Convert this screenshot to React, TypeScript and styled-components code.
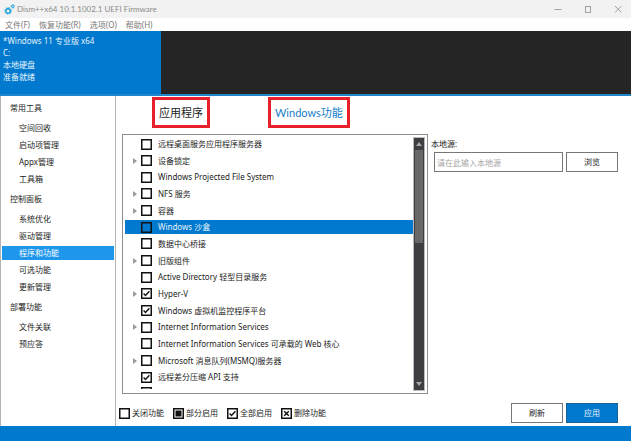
import React, { useState } from "react";
import styled, { createGlobalStyle } from "styled-components";

const GlobalStyle = createGlobalStyle`
  *, *::before, *::after { box-sizing: border-box; }
  body { margin: 0; }
  body, button, input {
    font-family: "Noto Sans", "Noto Sans CJK SC", sans-serif;
    font-size: 8px;
    line-height: 12px;
    color: #1c1c1c;
  }
  button { cursor: pointer; }
`;

const Window = styled.div`
  min-height: 100vh;
  display: flex;
  flex-direction: column;
  background: #fff;
`;

const TitleBar = styled.header`
  height: 18px;
  display: flex;
  align-items: center;
  gap: 2px;
  padding-left: 4px;
  background: #f2f2f2;
`;

const Title = styled.h1`
  flex: 1;
  margin: 0;
  font-family: Lato, "Noto Sans CJK SC", sans-serif;
  font-size: 8px;
  font-weight: 400;
  color: #8c8c8c;
`;

const CaptionButtons = styled.div`
  display: flex;
  gap: 4px;
`;

const CaptionButton = styled.button`
  width: 26px;
  height: 18px;
  display: grid;
  place-items: center;
  padding: 0;
  border: 0;
  background: none;
`;

const MenuBar = styled.nav`
  height: 13px;
  display: flex;
  align-items: center;
  gap: 9px;
  padding-left: 5px;
`;

const MenuButton = styled.button`
  padding: 0;
  border: 0;
  background: none;
  color: #777;
`;

const Banner = styled.section`
  height: 65px;
  display: flex;
  border-bottom: 2px solid #1f86cb;
  background: #252525;
`;

const SystemCard = styled.div`
  width: 161px;
  padding: 4px 3px;
  background: #0079ce;
  color: #e6f3fc;
`;

const SystemLine = styled.p`
  margin: 0;
`;

const Body = styled.div`
  flex: 1;
  display: flex;
`;

const Sidebar = styled.nav`
  width: 116px;
  padding: 6px 1px;
  border: solid #b4b4b4;
  border-width: 0 1px;
`;

const GroupTitle = styled.h2`
  margin: 0;
  padding-left: 8px;
  font-size: 8px;
  font-weight: 400;
`;

const NavList = styled.ul`
  display: flex;
  flex-direction: column;
  gap: 3px;
  margin: 0;
  padding: 7px 0;
  list-style: none;
`;

const NavLink = styled.a<{ $active: boolean }>`
  display: block;
  height: 14px;
  padding-left: 17px;
  line-height: 14px;
  text-decoration: none;
  color: ${(p) => (p.$active ? "#fff" : "#1c1c1c")};
  background: ${(p) => (p.$active ? "#1e96ec" : "transparent")};
`;

const Main = styled.main`
  flex: 1;
  min-width: 0;
  display: flex;
  flex-direction: column;
  padding: 1px 13px 3px 3px;
`;

const Tabs = styled.div`
  height: 33px;
  display: flex;
  align-items: flex-start;
  gap: 58px;
  padding-left: 33px;
`;

const Tab = styled.button<{ $active: boolean }>`
  height: 31px;
  padding: 0 4px;
  border: 3px solid #e8202c;
  background: none;
  font-family: Lato, "Noto Sans CJK SC", sans-serif;
  font-size: 11px;
  line-height: 24px;
  white-space: nowrap;
  color: ${(p) => (p.$active ? "#1580c8" : "#1c1c1c")};
`;

const Content = styled.div`
  flex: 1;
  display: flex;
  gap: 3px;
  padding: 4px 0 0 3px;
`;

const FeatureBox = styled.div`
  width: 306px;
  display: flex;
  padding: 2px;
  border: 1px solid #8f8f8f;
`;

const FeaturePane = styled.div`
  flex: 1;
  display: flex;
  flex-direction: column;
  padding-bottom: 2px;
`;

const FeatureList = styled.ul`
  flex: 1;
  display: grid;
  grid-auto-rows: 1fr;
  margin: 0;
  padding: 0;
  list-style: none;
`;

const FeatureRow = styled.li`
  min-height: 0;
  display: flex;
`;

const FeatureLine = styled.div<{ $selected: boolean }>`
  flex: 1;
  height: 14px;
  display: flex;
  align-items: center;
  color: ${(p) => (p.$selected ? "#e6f3fc" : "#1c1c1c")};
  background: ${(p) => (p.$selected ? "#0079ce" : "transparent")};
`;

const Expander = styled.button`
  width: 16px;
  height: 12px;
  display: flex;
  align-items: center;
  padding: 0 0 0 8px;
  border: 0;
  background: none;
`;

const ExpanderSpace = styled.span`
  width: 16px;
`;

const NextRow = styled.div`
  height: 2px;
  overflow: hidden;
  padding-left: 16px;
`;

const CheckLabel = styled.label<{ $gap: number }>`
  display: flex;
  align-items: center;
  gap: ${(p) => p.$gap}px;
  white-space: nowrap;
`;

const CheckFrame = styled.span`
  display: grid;
  width: 11px;
  height: 11px;
  > * { grid-area: 1 / 1; }
`;

const CheckInput = styled.input`
  appearance: none;
  width: 11px;
  height: 11px;
  margin: 0;
`;

const ScrollTrack = styled.div`
  width: 12px;
  display: flex;
  flex-direction: column;
  align-items: center;
  border: 1px solid #b9b9bb;
  background: #3e3e42;
`;

const ScrollButton = styled.button`
  width: 10px;
  height: 12px;
  display: grid;
  place-items: center;
  padding: 0;
  border: 0;
  background: none;
`;

const ScrollRange = styled.div`
  flex: 1;
`;

const ScrollThumb = styled.div`
  width: 8px;
  height: 41%;
  background: #686868;
`;

const SourcePanel = styled.form`
  flex: 1;
  min-width: 0;
  padding-top: 4px;
`;

const SourceLabel = styled.label`
  display: block;
`;

const SourceRow = styled.div`
  display: flex;
  gap: 3px;
  padding: 2px 0 0 3px;
`;

const SourceInput = styled.input`
  flex: 1;
  min-width: 0;
  height: 20px;
  padding: 0 2px;
  border: 1px solid #777;
  border-radius: 0;
  background: #fff;
  &::placeholder { color: #a6a6a6; }
`;

const PushButton = styled.button<{ $primary?: boolean }>`
  width: 52px;
  height: 20px;
  padding: 0;
  border: 1px solid ${(p) => (p.$primary ? "#1c5f91" : "#777")};
  background: ${(p) => (p.$primary ? "#0079ce" : "#fff")};
  color: ${(p) => (p.$primary ? "#e6f3fc" : "#1c1c1c")};
`;

const ActionRow = styled.div`
  display: flex;
  align-items: center;
  gap: 3px;
  padding-top: 9px;
`;

const Legend = styled.div`
  flex: 1;
  display: flex;
  gap: 9px;
`;

const StatusBar = styled.footer`
  height: 15px;
  background: #0079ce;
`;

type Mark = "off" | "on" | "part" | "remove";

function CheckGlyph({ mark }: { mark: Mark }) {
  return (
    <svg width="11" height="11" viewBox="0 0 11 11" fill="none" stroke="#111" aria-hidden="true">
      <rect x="0.75" y="0.75" width="9.5" height="9.5" strokeWidth="1.5" />
      {mark === "on" && <path d="M2.6 5.6 4.5 7.5 8.4 3.2" strokeWidth="1.4" />}
      {mark === "part" && <rect x="2.5" y="2.5" width="6" height="6" fill="#111" stroke="none" />}
      {mark === "remove" && <path d="M3.2 3.2 7.8 7.8M7.8 3.2 3.2 7.8" strokeWidth="1.5" />}
    </svg>
  );
}

interface CheckProps {
  text: string;
  initial: Mark;
  gap: number;
}

function Check({ text, initial, gap }: CheckProps) {
  const [mark, setMark] = useState<Mark>(initial);
  return (
    <CheckLabel $gap={gap}>
      <CheckFrame>
        <CheckGlyph mark={mark} />
        <CheckInput
          type="checkbox"
          checked={mark !== "off"}
          onChange={(e) => setMark(e.target.checked ? (initial === "off" ? "on" : initial) : "off")}
        />
      </CheckFrame>
      {text}
    </CheckLabel>
  );
}

const menus = ["文件(F)", "恢复功能(R)", "选项(O)", "帮助(H)"];

const systemLines = ["*Windows 11 专业版 x64", "C:", "本地硬盘", "准备就绪"];

const groups = [
  { title: "常用工具", items: ["空间回收", "启动项管理", "Appx管理", "工具箱"] },
  { title: "控制面板", items: ["系统优化", "驱动管理", "程序和功能", "可选功能", "更新管理"] },
  { title: "部署功能", items: ["文件关联", "预应答"] },
];

interface Feature {
  name: string;
  tree?: boolean;
  on?: boolean;
}

const features: Feature[] = [
  { name: "远程桌面服务应用程序服务器" },
  { name: "设备锁定", tree: true },
  { name: "Windows Projected File System" },
  { name: "NFS 服务", tree: true },
  { name: "容器", tree: true },
  { name: "Windows 沙盒" },
  { name: "数据中心桥接" },
  { name: "旧版组件", tree: true },
  { name: "Active Directory 轻型目录服务" },
  { name: "Hyper-V", tree: true, on: true },
  { name: "Windows 虚拟机监控程序平台", on: true },
  { name: "Internet Information Services", tree: true },
  { name: "Internet Information Services 可承载的 Web 核心" },
  { name: "Microsoft 消息队列(MSMQ)服务器", tree: true },
  { name: "远程差分压缩 API 支持", on: true },
];

const legend: { text: string; mark: Mark }[] = [
  { text: "关闭功能", mark: "off" },
  { text: "部分启用", mark: "part" },
  { text: "全部启用", mark: "on" },
  { text: "删除功能", mark: "remove" },
];

function GearsIcon() {
  return (
    <svg width="11" height="11" viewBox="0 0 11 11" fill="none" stroke="#1ba0dc" aria-hidden="true">
      <circle cx="4.1" cy="6.9" r="2.2" strokeWidth="1.4" />
      <circle cx="4.1" cy="6.9" r="3.3" strokeWidth="1" strokeDasharray="1.3 1.29" />
      <circle cx="8.8" cy="2.3" r="1.2" strokeWidth="1" />
      <circle cx="8.8" cy="2.3" r="1.9" strokeWidth="0.7" strokeDasharray="0.8 0.69" />
    </svg>
  );
}

export default function App() {
  const [page, setPage] = useState("程序和功能");
  const [tab, setTab] = useState("Windows功能");
  return (
    <>
      <GlobalStyle />
      <Window lang="zh-CN">
        <TitleBar>
          <GearsIcon />
          <Title>Dism++x64 10.1.1002.1 UEFI Firmware</Title>
          <CaptionButtons>
            <CaptionButton aria-label="最小化">
              <svg width="8" height="8" stroke="#a0a0a0"><path d="M0.5 4.5H7.5" /></svg>
            </CaptionButton>
            <CaptionButton aria-label="最大化">
              <svg width="8" height="8" stroke="#a0a0a0" fill="none"><rect x="1.5" y="1.5" width="5" height="6" /></svg>
            </CaptionButton>
            <CaptionButton aria-label="关闭">
              <svg width="8" height="8" stroke="#a0a0a0"><path d="M1 1 7.5 7.5M7.5 1 1 7.5" /></svg>
            </CaptionButton>
          </CaptionButtons>
        </TitleBar>
        <MenuBar>
          {menus.map((m) => (
            <MenuButton key={m}>{m}</MenuButton>
          ))}
        </MenuBar>
        <Banner>
          <SystemCard>
            {systemLines.map((l) => (
              <SystemLine key={l}>{l}</SystemLine>
            ))}
          </SystemCard>
        </Banner>
        <Body>
          <Sidebar>
            {groups.map((g) => (
              <React.Fragment key={g.title}>
                <GroupTitle>{g.title}</GroupTitle>
                <NavList>
                  {g.items.map((i) => (
                    <li key={i}>
                      <NavLink href="#" $active={i === page} onClick={() => setPage(i)}>
                        {i}
                      </NavLink>
                    </li>
                  ))}
                </NavList>
              </React.Fragment>
            ))}
          </Sidebar>
          <Main>
            <Tabs role="tablist">
              {["应用程序", "Windows功能"].map((t) => (
                <Tab key={t} role="tab" aria-selected={t === tab} $active={t === tab} onClick={() => setTab(t)}>
                  {t}
                </Tab>
              ))}
            </Tabs>
            <Content>
              <FeatureBox>
                <FeaturePane>
                  <FeatureList>
                    {features.map((f) => (
                      <FeatureRow key={f.name}>
                        <FeatureLine $selected={f.name === "Windows 沙盒"}>
                          {f.tree ? (
                            <Expander aria-label={`展开 ${f.name}`}>
                              <svg width="4" height="6" fill="#9a9a9a"><path d="M0 0 4 3 0 6Z" /></svg>
                            </Expander>
                          ) : (
                            <ExpanderSpace />
                          )}
                          <Check text={f.name} initial={f.on ? "on" : "off"} gap={6} />
                        </FeatureLine>
                      </FeatureRow>
                    ))}
                  </FeatureList>
                  <NextRow>
                    <CheckGlyph mark="off" />
                  </NextRow>
                </FeaturePane>
                <ScrollTrack>
                  <ScrollButton aria-label="向上滚动">
                    <svg width="6" height="4" fill="#a8a8a8"><path d="M0 4 3 0 6 4Z" /></svg>
                  </ScrollButton>
                  <ScrollRange>
                    <ScrollThumb />
                  </ScrollRange>
                  <ScrollButton aria-label="向下滚动">
                    <svg width="6" height="4" fill="#a8a8a8"><path d="M0 0 3 4 6 0Z" /></svg>
                  </ScrollButton>
                </ScrollTrack>
              </FeatureBox>
              <SourcePanel>
                <SourceLabel htmlFor="source">本地源:</SourceLabel>
                <SourceRow>
                  <SourceInput id="source" placeholder="请在此输入本地源" />
                  <PushButton type="button">浏览</PushButton>
                </SourceRow>
              </SourcePanel>
            </Content>
            <ActionRow>
              <Legend>
                {legend.map((l) => (
                  <Check key={l.text} text={l.text} initial={l.mark} gap={2} />
                ))}
              </Legend>
              <PushButton>刷新</PushButton>
              <PushButton $primary>应用</PushButton>
            </ActionRow>
          </Main>
        </Body>
        <StatusBar />
      </Window>
    </>
  );
}
